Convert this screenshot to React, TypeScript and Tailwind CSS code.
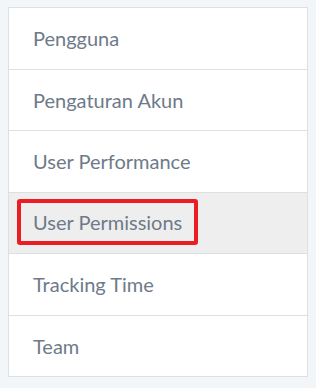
const items = [
  "Pengguna",
  "Pengaturan Akun",
  "User Performance",
  "User Permissions",
  "Tracking Time",
  "Team",
];

export default function App() {
  const active = "User Permissions";

  return (
    <div className="w-[316px] h-[388px] bg-[#f3f6f9] pt-[7px] pl-[8px]" style={{ fontFamily: "Lato, 'Noto Sans', sans-serif" }}>
      <ul className="w-[300px] bg-white border-t border-x border-[#dcdfe3]">
        {items.map((item) => (
          <li
            key={item}
            className={
              item === active
                ? "h-[61.5px] flex items-center pl-[8px] border-b border-[#dcdfe3] bg-[#eeeeee]"
                : "h-[61.5px] flex items-center pl-[24px] border-b border-[#dcdfe3]"
            }
          >
            {item === active ? (
              <span className="h-[46px] -mt-[2px] flex items-center pl-[12px] pr-[12px] border-4 border-[#ec1c24] rounded-[3px] text-[20px] text-[#6e7a89]">
                {item}
              </span>
            ) : (
              <span className="text-[20px] text-[#6e7a89]">{item}</span>
            )}
          </li>
        ))}
      </ul>
    </div>
  );
}
